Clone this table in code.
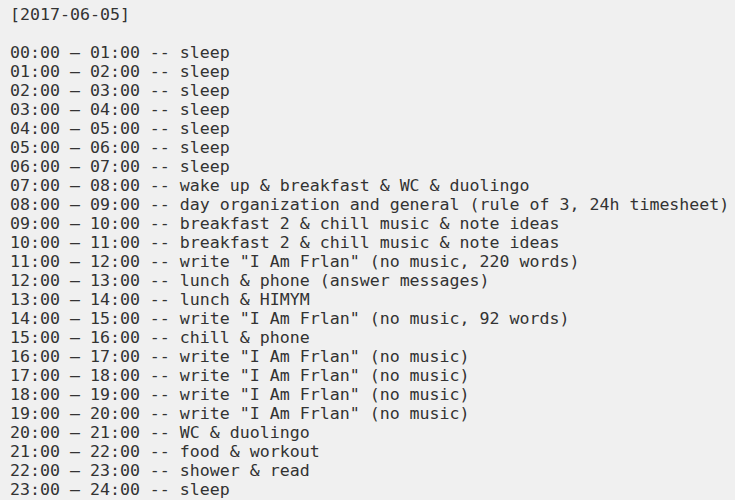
import React from 'react';

const rows: [string, string][] = [
  ['00:00 – 01:00', 'sleep'],
  ['01:00 – 02:00', 'sleep'],
  ['02:00 – 03:00', 'sleep'],
  ['03:00 – 04:00', 'sleep'],
  ['04:00 – 05:00', 'sleep'],
  ['05:00 – 06:00', 'sleep'],
  ['06:00 – 07:00', 'sleep'],
  ['07:00 – 08:00', 'wake up & breakfast & WC & duolingo'],
  ['08:00 – 09:00', 'day organization and general (rule of 3, 24h timesheet)'],
  ['09:00 – 10:00', 'breakfast 2 & chill music & note ideas'],
  ['10:00 – 11:00', 'breakfast 2 & chill music & note ideas'],
  ['11:00 – 12:00', 'write "I Am Frlan" (no music, 220 words)'],
  ['12:00 – 13:00', 'lunch & phone (answer messages)'],
  ['13:00 – 14:00', 'lunch & HIMYM'],
  ['14:00 – 15:00', 'write "I Am Frlan" (no music, 92 words)'],
  ['15:00 – 16:00', 'chill & phone'],
  ['16:00 – 17:00', 'write "I Am Frlan" (no music)'],
  ['17:00 – 18:00', 'write "I Am Frlan" (no music)'],
  ['18:00 – 19:00', 'write "I Am Frlan" (no music)'],
  ['19:00 – 20:00', 'write "I Am Frlan" (no music)'],
  ['20:00 – 21:00', 'WC & duolingo'],
  ['21:00 – 22:00', 'food & workout'],
  ['22:00 – 23:00', 'shower & read'],
  ['23:00 – 24:00', 'sleep'],
];

const App: React.FC = () => {
  return (
    <div className="w-[735px] h-[500px] overflow-hidden bg-[#f0f0f0]">
      <pre className="pl-[10px] pt-[5px] text-[16.6px] leading-[19px] text-[#333333] font-['DejaVu_Sans_Mono',monospace] whitespace-pre">
        <div>[2017-06-05]</div>
        <div>&nbsp;</div>
        {rows.map(([time, what], i) => (
          <div key={i}>
            {time} -- {what}
          </div>
        ))}
      </pre>
    </div>
  );
};

export default App;
